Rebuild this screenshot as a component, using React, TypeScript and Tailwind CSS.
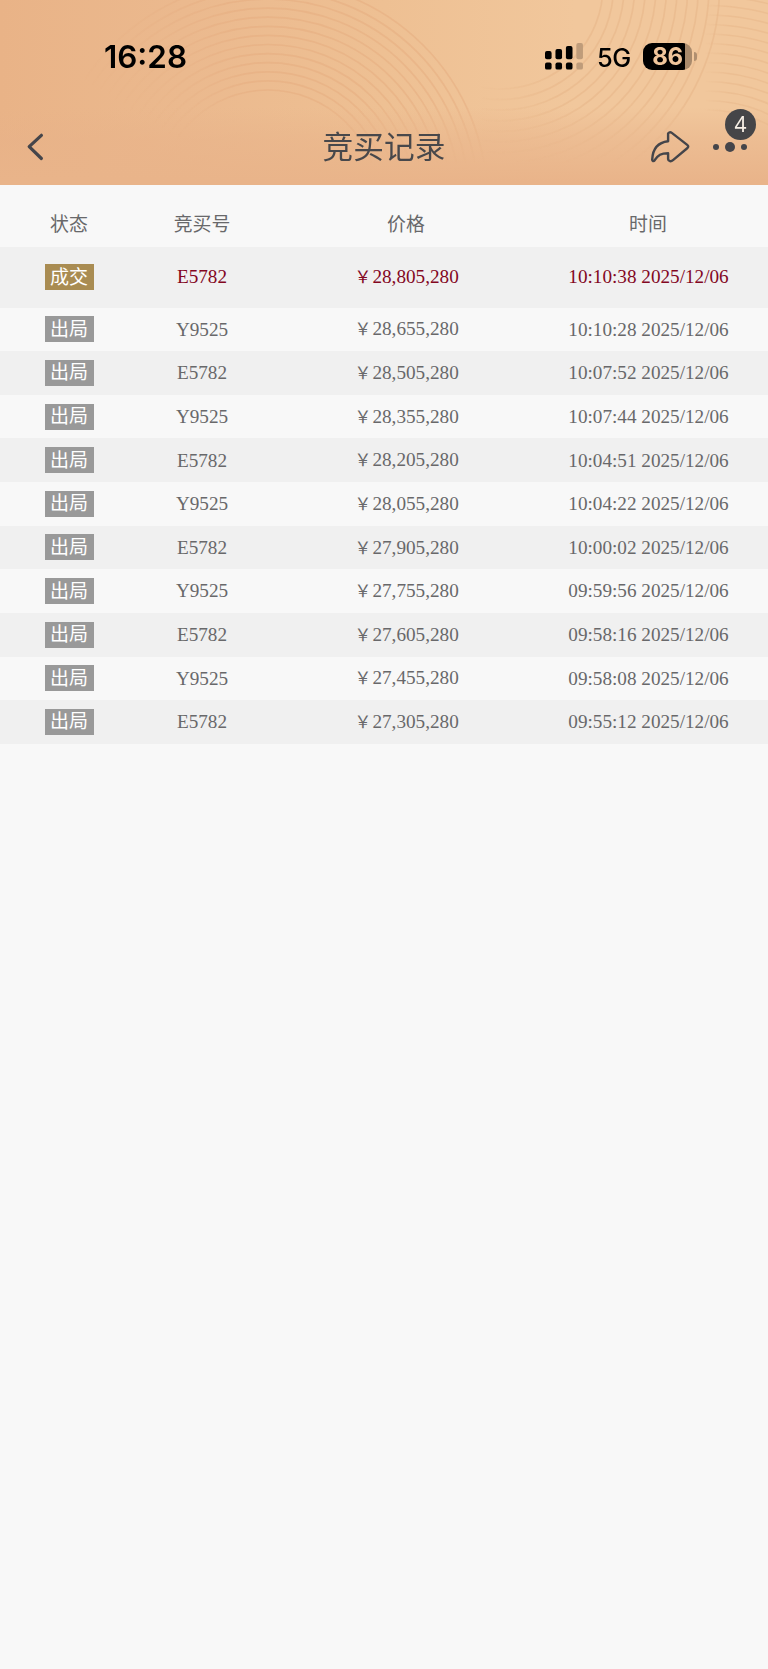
type Bid = { status: string; bidder: string; price: string; time: string; won?: boolean };

const bids: Bid[] = [
  { status: "成交", bidder: "E5782", price: "28,805,280", time: "10:10:38 2025/12/06", won: true },
  { status: "出局", bidder: "Y9525", price: "28,655,280", time: "10:10:28 2025/12/06" },
  { status: "出局", bidder: "E5782", price: "28,505,280", time: "10:07:52 2025/12/06" },
  { status: "出局", bidder: "Y9525", price: "28,355,280", time: "10:07:44 2025/12/06" },
  { status: "出局", bidder: "E5782", price: "28,205,280", time: "10:04:51 2025/12/06" },
  { status: "出局", bidder: "Y9525", price: "28,055,280", time: "10:04:22 2025/12/06" },
  { status: "出局", bidder: "E5782", price: "27,905,280", time: "10:00:02 2025/12/06" },
  { status: "出局", bidder: "Y9525", price: "27,755,280", time: "09:59:56 2025/12/06" },
  { status: "出局", bidder: "E5782", price: "27,605,280", time: "09:58:16 2025/12/06" },
  { status: "出局", bidder: "Y9525", price: "27,455,280", time: "09:58:08 2025/12/06" },
  { status: "出局", bidder: "E5782", price: "27,305,280", time: "09:55:12 2025/12/06" },
];

const rings = Array.from({ length: 13 }, (_, i) => i);

/** Concentric ripple pattern behind the header. */
function Ripples() {
  return (
    <svg className="absolute inset-0" width="768" height="185" viewBox="0 0 768 185" fill="none" aria-hidden="true">
      <defs>
        <linearGradient id="fade" x1="0" y1="0" x2="0" y2="1">
          <stop offset="0" stopColor="#fff" />
          <stop offset="0.55" stopColor="#fff" />
          <stop offset="0.88" stopColor="#000" />
        </linearGradient>
        <linearGradient id="side" x1="0" y1="0" x2="1" y2="0">
          <stop offset="0.08" stopColor="#e5ab7f" stopOpacity="0" />
          <stop offset="0.42" stopColor="#e5ab7f" />
        </linearGradient>
        <linearGradient id="enter" gradientUnits="userSpaceOnUse" x1="480" y1="0" x2="560" y2="0">
          <stop offset="0" stopColor="#e3ae80" stopOpacity="0" />
          <stop offset="1" stopColor="#e3ae80" />
        </linearGradient>
        <linearGradient id="edge" gradientUnits="userSpaceOnUse" x1="705" y1="0" x2="730" y2="0">
          <stop offset="0" stopColor="#e3ae80" stopOpacity="0" />
          <stop offset="1" stopColor="#e3ae80" />
        </linearGradient>
        <mask id="lower">
          <rect width="768" height="185" fill="url(#fade)" />
        </mask>
      </defs>
      <g mask="url(#lower)" strokeWidth="1.7">
        <g stroke="url(#side)" opacity="0.5">
          {rings.map((i) => (
            <circle key={i} cx="268" cy="200" r={110 + i * 9.1} />
          ))}
        </g>
        <g stroke="url(#enter)" opacity="0.38">
          {rings.slice(0, 12).map((i) => (
            <circle key={i} cx="500" cy="-14" r={103 + i * 10.6} />
          ))}
        </g>
        <g stroke="url(#edge)" opacity="0.35">
          {rings.map((i) => (
            <circle key={i} cx="706" cy="250" r={140 + i * 9.5} />
          ))}
        </g>
      </g>
    </svg>
  );
}

function Signal() {
  const tops = [51, 49, 46, 43];
  return (
    <svg width="38" height="27" viewBox="545 43 38 27" className="mr-[14px]" aria-hidden="true">
      {tops.map((y, i) => (
        <g key={i} fill={i === 3 ? "#bf9c7a" : "#000"}>
          <rect x={545 + i * 10.45} y={y} width="6.6" height={59.2 - y} rx="1.9" />
          <rect x={545 + i * 10.45} y="62.6" width="6.6" height="7" rx="1.9" />
        </g>
      ))}
    </svg>
  );
}

function Battery() {
  return (
    <div className="flex items-center">
      <div className="flex h-[27px] w-[49px] items-center justify-center rounded-[9px] bg-[linear-gradient(90deg,#000_0,#000_42px,#a98a6c_42px)] font-['Inter'] text-[24px] font-bold leading-none tracking-[-0.3px] text-[#f0c59b]">
        86
      </div>
      <div className="ml-[2px] h-[9px] w-[3px] rounded-r-full bg-[#b08f70]" />
    </div>
  );
}

function Header() {
  return (
    <header className="relative h-[185px] overflow-hidden bg-[linear-gradient(180deg,rgba(232,178,137,0)_58%,rgba(232,178,137,0.5)_76%,#e9b48a_98%),linear-gradient(90deg,#e9b387_0%,#ebb98e_24%,#eec093_50%,#f1c79c_75%,#f1c79c_100%)]">
      <Ripples />
      <div className="relative flex h-[113px] items-center">
        <div className="ml-[104px] mt-[2px] w-[90px] font-['Inter'] text-[31.4px] font-semibold leading-none text-black">
          16:28
        </div>
        <div className="ml-auto mr-[71px] flex items-center">
          <Signal />
          <span className="mt-[3px] w-[46px] font-['Inter'] text-[25.4px] font-medium leading-none tracking-[-0.5px] text-black">5G</span>
          <Battery />
        </div>
      </div>
      <div className="relative grid h-[68px] grid-cols-[160px_1fr_160px] items-center">
        <svg className="ml-[26px]" width="20" height="30" viewBox="26 132 20 30" fill="none" stroke="#45454a" strokeWidth="3.2" strokeLinecap="round" strokeLinejoin="round" aria-label="返回">
          <path d="M41.4 135.3 29.2 146.7 41.4 158.5" />
        </svg>
        <h1 className="pt-[3px] text-center text-[30.7px] leading-none text-[#48484b]">竞买记录</h1>
        <div className="flex items-center">
          <svg className="ml-[41px]" width="42" height="36" viewBox="649 129 42 36" fill="none" stroke="#45454a" strokeWidth="2.4" strokeLinejoin="round" aria-label="分享">
            <path d="M668.1 133.6C668.5 132.1 670.5 131.9 671.8 132.9L687.2 144.9Q689.3 146.6 687.2 148.3L673 160.2C671 161.9 668.3 161.4 668.1 159.2V153.2C661 153.2 658 155 654.7 160.2C653.6 161.8 652 161.2 652.2 159.5C652.7 149.7 657.5 142.4 668.1 141.2Z" />
          </svg>
          <div className="relative ml-[22px] flex h-[36px] w-[34px] items-center justify-center gap-[6px]">
            <span className="size-[6px] rounded-full bg-[#45454a]" />
            <span className="size-[10px] rounded-full bg-[#45454a]" />
            <span className="size-[6px] rounded-full bg-[#45454a]" />
            <span className="absolute -top-[20px] left-[12px] flex size-[31px] items-center justify-center rounded-full bg-[#454548] font-['Noto_Sans'] text-[21px] leading-none text-[#f7efe6]">
              4
            </span>
          </div>
        </div>
      </div>
    </header>
  );
}

const columns = "grid grid-cols-[138px_128px_280px_204px] items-center text-center";

export default function App() {
  return (
    <main className="min-h-[1669px] w-[768px] bg-[#f8f8f8] font-['Liberation_Serif','Noto_Sans_CJK_SC',serif] text-[19.2px] leading-none text-[#68686a]">
      <Header />
      <div className={`${columns} h-[61.5px] pt-[20px] text-[18.9px]`}>
        <span>状态</span>
        <span>竞买号</span>
        <span>价格</span>
        <span>时间</span>
      </div>
      {bids.map((bid, i) => (
        <div
          key={bid.time}
          className={`${columns} ${bid.won ? "h-[61px] text-[#83071f]" : "h-[43.63px]"} ${i % 2 === 0 ? "bg-[#f0f0f0]" : ""}`}
        >
          <span className={`mx-auto flex h-[26px] w-[49px] items-center justify-center text-[19px] text-white ${bid.won ? "bg-[#a98c52]" : "bg-[#999999]"}`}>
            {bid.status}
          </span>
          <span>{bid.bidder}</span>
          <span>
            <span className="inline-block w-[19.2px] text-center text-[16.8px]">￥</span>
            {bid.price}
          </span>
          <span className="pl-px">{bid.time}</span>
        </div>
      ))}
    </main>
  );
}
